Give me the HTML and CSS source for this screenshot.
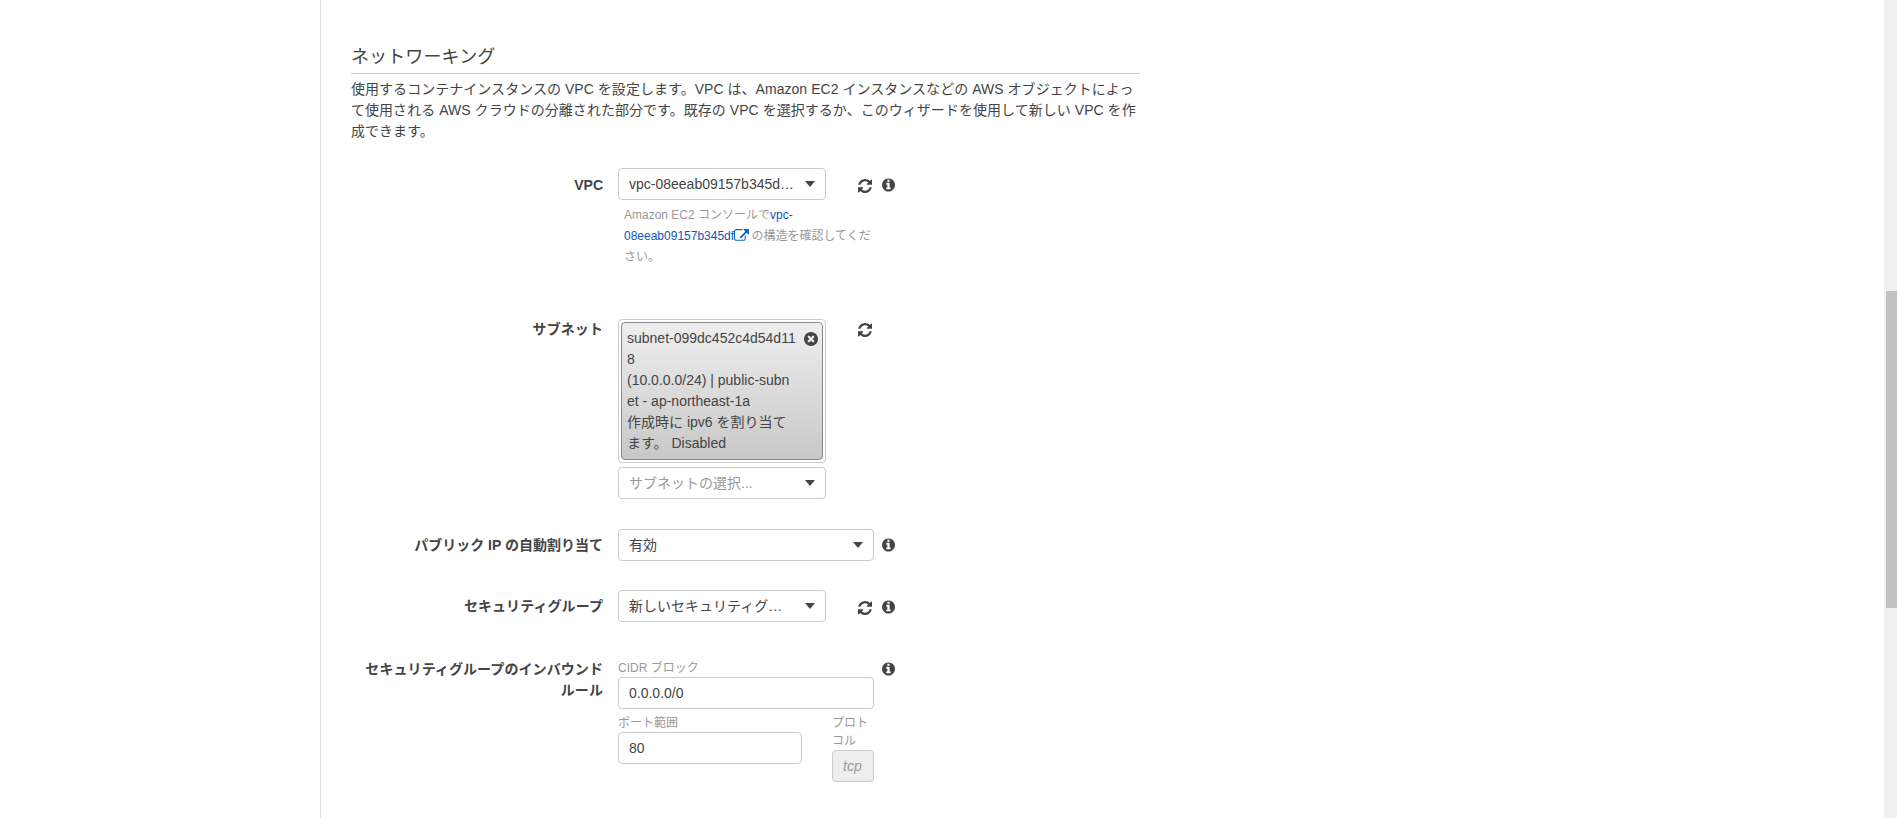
FILE: index.html
```html
<!DOCTYPE html>
<html lang="ja">
<head>
<meta charset="utf-8">
<title>ネットワーキング</title>
<link rel="stylesheet" href="styles.css">
</head>
<body>
<svg class="sprite" aria-hidden="true">
  <symbol id="refresh" viewBox="128 128 1536 1536"><path d="M1639 1056q0 5-1 7-64 268-268 434.5t-478 166.5q-146 0-282.5-55t-243.5-157l-129 129q-19 19-45 19t-45-19-19-45v-448q0-26 19-45t45-19h448q26 0 45 19t19 45-19 45l-137 137q71 66 161 102t187 36q134 0 250-65t186-179q11-17 53-117 8-23 30-23h192q13 0 22.5 9.5t9.5 22.5zm25-800v448q0 26-19 45t-45 19h-448q-26 0-45-19t-19-45 19-45l138-138q-148-137-349-137-134 0-250 65t-186 179q-11 17-53 117-8 23-30 23h-199q-13 0-22.5-9.5t-9.5-22.5v-7q65-268 270-434.5t480-166.5q146 0 284 55.5t245 156.5l130-129q19-19 45-19t45 19 19 45z"/></symbol>
  <symbol id="info" viewBox="128 128 1536 1536"><path d="M1152 1376v-160q0-14-9-23t-23-9h-96v-512q0-14-9-23t-23-9h-320q-14 0-23 9t-9 23v160q0 14 9 23t23 9h96v320h-96q-14 0-23 9t-9 23v160q0 14 9 23t23 9h448q14 0 23-9t9-23zm-128-896v-160q0-14-9-23t-23-9h-192q-14 0-23 9t-9 23v160q0 14 9 23t23 9h192q14 0 23-9t9-23zm640 416q0 209-103 385.5t-279.5 279.5-385.5 103-385.5-103-279.5-279.5-103-385.5 103-385.5 279.5-279.5 385.5-103 385.5 103 279.5 279.5 103 385.5z"/></symbol>
  <symbol id="close" viewBox="128 128 1536 1536"><path d="M1277 1122q0-26-19-45l-181-181 181-181q19-19 19-45 0-27-19-46l-90-90q-19-19-46-19-26 0-45 19l-181 181-181-181q-19-19-45-19-27 0-46 19l-90 90q-19 19-19 46 0 26 19 45l181 181-181 181q-19 19-19 45 0 27 19 46l90 90q19 19 46 19 26 0 45-19l181-181 181 181q19 19 45 19 27 0 46-19l90-90q19-19 19-46zm387-226q0 209-103 385.5t-279.5 279.5-385.5 103-385.5-103-279.5-279.5-103-385.5 103-385.5 279.5-279.5 385.5-103 385.5 103 279.5 279.5 103 385.5z"/></symbol>
  <symbol id="external" viewBox="0 0 1792 1536"><path d="M1408 800v320q0 119-84.500 203.500t-203.500 84.500h-832q-119 0-203.500-84.500t-84.500-203.500v-832q0-119 84.500-203.500t203.500-84.500h704q14 0 23 9t9 23v64q0 14-9 23t-23 9h-704q-66 0-113 47t-47 113v832q0 66 47 113t113 47h832q66 0 113-47t47-113v-320q0-14 9-23t23-9h64q14 0 23 9t9 23zm384-736v512q0 26-19 45t-45 19-45-19l-176-176-652 652q-10 10-23 10t-23-10l-114-114q-10-10-10-23t10-23l652-652-176-176q-19-19-19-45t19-45 45-19h512q26 0 45 19t19 45z"/></symbol>
</svg>
<div class="page">
  <aside class="side"></aside>
  <main class="content">
    <h2 class="heading">ネットワーキング</h2>
    <p class="intro">使用するコンテナインスタンスの VPC を設定します。VPC は、Amazon EC2 インスタンスなどの AWS オブジェクトによっ<br>て使用される AWS クラウドの分離された部分です。既存の VPC を選択するか、このウィザードを使用して新しい VPC を作<br>成できます。</p>

    <div class="row row-vpc">
      <div class="label">VPC</div>
      <div class="field">
        <div class="line">
          <div class="select short"><span>vpc-08eeab09157b345d…</span><i class="caret"></i></div>
          <svg class="icon refresh"><use href="#refresh"/></svg>
        </div>
        <p class="help">Amazon EC2 コンソールで<a class="link">vpc-<br>08eeab09157b345df<svg class="ext"><use href="#external"/></svg></a> の構造を確認してくだ<br>さい。</p>
      </div>
      <svg class="icon info"><use href="#info"/></svg>
    </div>

    <div class="row row-subnet">
      <div class="label">サブネット</div>
      <div class="field">
        <div class="line">
          <div class="tokens">
            <div class="token">
              <div class="token-text">subnet-099dc452c4d54d11<br>8<br>(10.0.0.0/24) | public-subn<br>et - ap-northeast-1a<br>作成時に ipv6 を割り当て<br>ます。 Disabled</div>
              <svg class="icon close"><use href="#close"/></svg>
            </div>
          </div>
          <svg class="icon refresh"><use href="#refresh"/></svg>
        </div>
        <div class="select short placeholder"><span>サブネットの選択...</span><i class="caret"></i></div>
      </div>
    </div>

    <div class="row row-ip">
      <div class="label">パブリック IP の自動割り当て</div>
      <div class="field">
        <div class="select"><span>有効</span><i class="caret"></i></div>
      </div>
      <svg class="icon info"><use href="#info"/></svg>
    </div>

    <div class="row row-group">
      <div class="label">セキュリティグループ</div>
      <div class="field">
        <div class="line">
          <div class="select short"><span>新しいセキュリティグ…</span><i class="caret"></i></div>
          <svg class="icon refresh"><use href="#refresh"/></svg>
        </div>
      </div>
      <svg class="icon info"><use href="#info"/></svg>
    </div>

    <div class="row row-rules">
      <div class="label">セキュリティグループのインバウンド<br>ルール</div>
      <div class="field">
        <div class="caption">CIDR ブロック</div>
        <div class="input">0.0.0.0/0</div>
        <div class="pair">
          <div class="port">
            <div class="caption">ポート範囲</div>
            <div class="input">80</div>
          </div>
          <div class="protocol">
            <div class="caption">プロト<br>コル</div>
            <div class="input disabled">tcp</div>
          </div>
        </div>
      </div>
      <svg class="icon info"><use href="#info"/></svg>
    </div>
  </main>
  <div class="scrollbar"><div class="thumb"></div></div>
</div>
</body>
</html>
```
FILE: styles.css
```css
* { box-sizing: border-box; }
body {
  margin: 0;
  overflow: hidden;
  background: #fff;
  color: #444;
  font: 14px/21px "Liberation Sans", "Noto Sans CJK JP", sans-serif;
}
p, h2 { margin: 0; }
.sprite { display: none; }
.page { display: flex; height: 818px; }
.side { flex: none; width: 321px; border-right: 1px solid #ddd; }
.content { flex: 1; padding: 42px 0 0 30px; }
.heading {
  width: 789px;
  height: 32px;
  border-bottom: 1px solid #ccc;
  font-size: 18px;
  font-weight: 400;
  line-height: 30px;
  letter-spacing: .12px;
}
.intro { width: 789px; height: 63px; margin-top: 5px; white-space: nowrap; letter-spacing: .04px; }

.row { display: grid; grid-template-columns: 252px 256px 14px; column-gap: 15px; align-items: start; }
.row-vpc { margin-top: 26px; height: 151px; }
.row-subnet { height: 210px; }
.row-ip { height: 61px; }
.row-group { height: 68px; }
.label { padding-top: 6px; font-weight: 700; text-align: right; white-space: nowrap; letter-spacing: .08px; }
.row-vpc .label { padding-top: 7px; letter-spacing: 0; }
.row-subnet .label { padding-top: 0; }
.row-ip .label { letter-spacing: 0; }
.row-rules .label { padding-top: 1px; }

.line { display: flex; align-items: flex-start; }
.select, .input {
  display: flex;
  align-items: center;
  justify-content: space-between;
  height: 32px;
  padding: 0 10px;
  border: 1px solid #ccc;
  border-radius: 4px;
  background: #fff;
  white-space: nowrap;
}
.short { width: 208px; }
.placeholder { margin-top: 4px; color: #999; }
.caret { border: 5px solid transparent; border-top: 6px solid #444; border-bottom: 0; margin-bottom: 1px; }
.icon { display: block; flex: none; width: 14px; height: 14px; fill: #444; }
.refresh { margin: 11px 0 0 32px; }
.row-subnet .refresh { margin-top: 4px; }
.info { width: 13px; margin: 10px 0 0 -7px; }
.row-ip .info { margin-top: 9px; }
.row-rules .info { margin-top: 4px; }

.help { padding: 5px 0 0 6px; color: #999; font-size: 12px; white-space: nowrap; }
.link { color: #1155bb; }
.ext { width: 15px; height: 13px; fill: #1166bb; margin-right: -1px; vertical-align: -2px; }

.tokens { width: 208px; height: 144px; padding: 2px; border: 1px solid #ccc; border-radius: 4px; }
.token {
  display: flex;
  justify-content: space-between;
  height: 138px;
  padding: 5px 4px 0 5px;
  border: 1px solid #888;
  border-radius: 4px;
  background: linear-gradient(#eee, #c8c8c8);
  white-space: nowrap;
}
.token-text { width: 170px; }
.close { margin-top: 4px; }

.caption { height: 19px; padding-top: 1px; color: #999; font-size: 12px; line-height: 18px; }
.pair { display: flex; justify-content: space-between; padding-top: 4px; }
.port { width: 184px; }
.protocol { width: 42px; }
.protocol .caption { height: 37px; }
.disabled { background: #eee; color: #999; font-style: italic; }

.scrollbar { flex: none; width: 13px; padding: 291px 0 0 2px; background: #f0f0f0; }
.thumb { height: 317px; background: #c1c1c1; }
```
